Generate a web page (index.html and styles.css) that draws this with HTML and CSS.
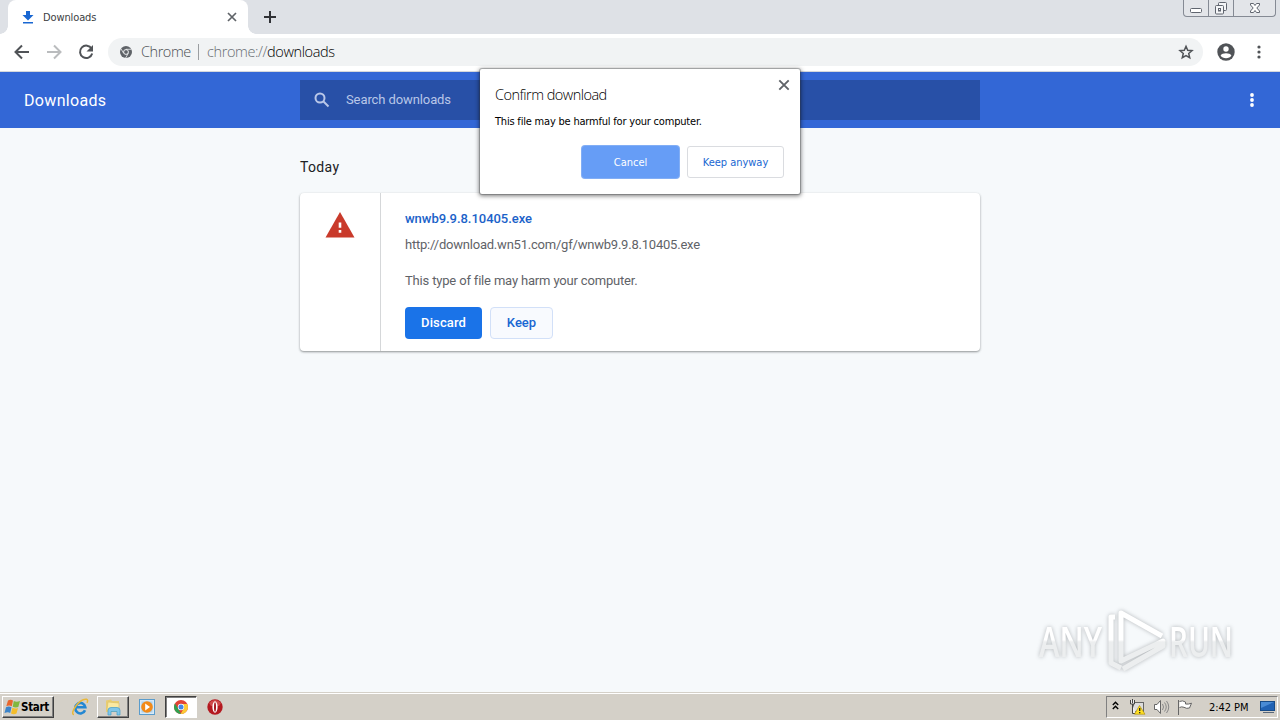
FILE: index.html
```html
<!DOCTYPE html>
<html lang="en">
<head>
<meta charset="utf-8">
<title>Downloads</title>
<link rel="stylesheet" href="styles.css">
</head>
<body>
<div class="desktop">
  <div class="tabstrip">
    <div class="tab">
      <svg class="tab-icon" width="12" height="13" viewBox="0 0 12 13"><path d="M4 0h4v4h3.500L6 9.500.5 4H4zM1 11h10v1.600H1z" fill="#1967d2"/></svg>
      <span class="tab-title">Downloads</span>
      <svg width="10" height="10" viewBox="0 0 10 10"><path d="M1 1l8 8M9 1L1 9" stroke="#5f6368" stroke-width="1.700"/></svg>
    </div>
    <svg class="new-tab" width="12" height="12" viewBox="0 0 12 12"><path d="M6 0v12M0 6h12" stroke="#303236" stroke-width="2"/></svg>
    <div class="win-buttons">
      <span class="wb"><svg width="14" height="16"><rect x="1.500" y="8.500" width="11" height="4" rx="1" fill="#fff" stroke="#60656f"/></svg></span>
      <span class="wb"><svg width="14" height="16" fill="#f4f5f7" stroke="#60656f"><rect x="4.500" y="2.500" width="8" height="8" rx="1"/><rect x="1.500" y="5.500" width="8" height="8.500" rx="1"/><rect x="4.500" y="8.500" width="2" height="2.500"/></svg></span>
      <span class="wb close"><svg width="14" height="16"><path d="M2.500 3.500h3L7 5.500l1.500-2h3v1.500L8.800 8l2.700 3v1.500h-3L7 10.500l-1.500 2h-3V11l2.700-3-2.700-3z" fill="#fff" stroke="#60656f"/></svg></span>
    </div>
  </div>
  <div class="toolbar">
    <svg width="16" height="16" viewBox="0 0 16 16" fill="none" stroke="#505357" stroke-width="2"><path d="M15 8H2M8 1.500L1.500 8 8 14.500"/></svg>
    <svg width="16" height="16" viewBox="0 0 16 16" fill="none" stroke="#babcbe" stroke-width="2"><path d="M1 8h13M8 1.500L14.500 8 8 14.500"/></svg>
    <svg width="16" height="16" viewBox="0 0 16 16" fill="none"><path d="M13.600 4.700A6.200 6.200 0 1 0 14.200 9.500" stroke="#505357" stroke-width="2"/><path d="M15 1v6.500H8.500z" fill="#505357"/></svg>
    <div class="omnibox">
      <svg width="12" height="12" viewBox="0 0 12 12"><circle cx="6" cy="6" r="6" fill="#5f6368"/><circle cx="6" cy="6" r="2.400" fill="#5f6368" stroke="#f1f3f4"/><path d="M6 3.300h5.500M3.700 7.300L1 2.800M8.300 7.300L5.600 12" stroke="#f1f3f4" stroke-width=".8"/></svg>
      <span class="site">Chrome</span>
      <span class="divider"></span>
      <span class="url">chrome://<b>downloads</b></span>
      <svg class="star" width="16" height="16" viewBox="0 0 16 16"><path d="M8 2.300l1.700 4 4.300.4-3.300 2.800 1 4.200L8 11.500l-3.700 2.200 1-4.200L2 6.700 6.300 6.300z" fill="none" stroke="#505357" stroke-width="1.500"/></svg>
    </div>
    <svg class="avatar" width="18" height="18" viewBox="0 0 18 18"><circle cx="9" cy="9" r="8.700" fill="#505357"/><circle cx="9" cy="6" r="2.700" fill="#fff"/><path d="M3.600 12.500C5 9.600 13 9.600 14.400 12.500 12.500 16 5.500 16 3.600 12.500z" fill="#fff"/></svg>
    <svg class="menu" width="4" height="16" viewBox="0 0 4 16" fill="#505357"><circle cx="2" cy="3" r="1.600"/><circle cx="2" cy="8" r="1.600"/><circle cx="2" cy="13" r="1.600"/></svg>
  </div>
  <div class="header">
    <h1>Downloads</h1>
    <div class="search">
      <svg width="16" height="16" viewBox="0 0 16 16" fill="none" stroke="#b9c7e8" stroke-width="2"><circle cx="6" cy="6" r="4.500"/><path d="M9.500 9.500l5 5"/></svg>
      <span>Search downloads</span>
    </div>
    <svg width="4" height="16" viewBox="0 0 4 16" fill="#fff"><circle cx="2" cy="3" r="1.900"/><circle cx="2" cy="8" r="1.900"/><circle cx="2" cy="13" r="1.900"/></svg>
  </div>
  <div class="content">
    <h2>Today</h2>
    <div class="card">
      <div class="card-icon"><svg width="30" height="26" viewBox="0 0 30 26"><path d="M15 0l14.500 25.500H.5z" fill="#c93a2b"/><path d="M13.700 10.500h2.600v5.300h-2.600zM13.700 18h2.600v2.700h-2.600z" fill="#fff"/></svg></div>
      <div class="card-body">
        <div class="file">wnwb9.9.8.10405.exe</div>
        <div class="link">http://download.wn51.com/gf/wnwb9.9.8.10405.exe</div>
        <div class="desc">This type of file may harm your computer.</div>
        <div class="actions"><span class="btn discard">Discard</span><span class="btn keep">Keep</span></div>
      </div>
    </div>
  </div>
  <div class="taskbar">
    <div class="start">
      <svg width="17" height="16" viewBox="0 0 17 16"><path d="M4 1.500Q6.500 0 9 1.500L7.800 7.300Q5.300 6 2.300 7.200z" fill="#e8662c"/><path d="M9.800 2Q12.500 3.300 16 2L14.300 8Q11.500 9 8.700 7.700z" fill="#81b73e"/><path d="M2 8.200Q5 7 7.500 8.300L6.200 14Q4 12.700 .5 14z" fill="#3c84c9"/><path d="M8.400 8.700Q11 10 14 8.900L12.500 14.500Q9.700 15.800 7 14.400z" fill="#f4bd2b"/></svg>
      <span>Start</span>
    </div>
    <div class="task ie"><svg width="18" height="18" viewBox="0 0 18 18" fill="none"><path d="M14 12.200A5 5.300 0 1 1 14.300 9.200H5.500" stroke="#2387d2" stroke-width="2.600"/><path d="M3 16.500C-2 16 8.500 0 15.500 1.300c1.500.4 1.300 2 .5 3.500" stroke="#e9b83a" stroke-width="1.500"/></svg></div>
    <div class="task raised"><svg width="18" height="18" viewBox="0 0 18 18"><path d="M2 2.500l5-1 1 1.500h7V14H2z" fill="#e9cd72"/><path d="M4 4l11 1v7H3z" fill="#fae9a2" stroke="#d8bd62" stroke-width=".6"/><path d="M4 17v-4.500q0-3 3-3h6q3 0 3 3V17h-3v-3.500H7V17z" fill="#7fc6ea" stroke="#459dc9" stroke-width=".7"/></svg></div>
    <div class="task wmp"><svg width="16" height="16" viewBox="0 0 16 16"><rect x=".5" y=".5" width="15" height="15" fill="#d6e9f7" stroke="#5a9ccc"/><rect x="2.500" y="2.500" width="11" height="11" fill="#a9cfec"/><circle cx="8" cy="8" r="5.800" fill="#f28a18"/><path d="M6.200 4.500L11 8l-4.800 3.500z" fill="#fff"/></svg></div>
    <div class="task pressed"><svg width="14" height="14" viewBox="0 0 14 14"><circle cx="7" cy="7" r="7" fill="#e14335"/><path d="M.9 3.600L4.300 8.700 7 14A7 7 0 0 1 .9 3.600z" fill="#2fa04f"/><path d="M13.200 3.900H7L9.700 8.600 6.600 14a7 7 0 0 0 6.600-10.100z" fill="#fbcb35"/><circle cx="7" cy="7" r="3.200" fill="#fff"/><circle cx="7" cy="7" r="2.500" fill="#4285e8"/></svg></div>
    <div class="task opera"><svg width="16" height="16" viewBox="0 0 16 16"><circle cx="8" cy="8" r="7.700" fill="#b41920"/><path d="M2 4Q8-2 14 4L12 7H4z" fill="#cf4a4b"/><ellipse cx="8" cy="8" rx="2.600" ry="5.800" fill="#fff"/><ellipse cx="8" cy="8" rx="1" ry="4.700" fill="#a51920"/></svg></div>
    <div class="tray">
      <svg class="chev" width="7" height="9" viewBox="0 0 7 9" fill="none" stroke="#000" stroke-width="1.400"><path d="M.8 4L3.500 1.300 6.200 4M.8 8L3.500 5.300 6.200 8"/></svg>
      <svg class="net" width="17" height="16" viewBox="0 0 17 16"><rect x="4.500" y="3.500" width="10" height="9" fill="#ddd" stroke="#666"/><path d="M1.500 1v4h4V1M3.500 5v9.500H7M3.500 0v4" stroke="#444" fill="#eee"/><path d="M10.500 6.500l5.500 8.700H5.500z" fill="#ffdf22" stroke="#a78700" stroke-width=".6"/><path d="M10.700 9v3M10.700 13v1.200" stroke="#222" stroke-width="1.300"/></svg>
      <svg class="vol" width="17" height="16" viewBox="0 0 17 16" fill="none" stroke="#666"><path d="M1.500 5.500h2.500l3.500-4v13L4 10.500H1.500z" fill="#fff"/><path d="M9.500 5q2 3 0 6M11.500 3.500q3.500 4.500 0 9M13.500 2q4.500 6 0 12" stroke="#888"/></svg>
      <svg class="flag" width="16" height="16" viewBox="0 0 16 16"><path d="M1.500 1v15M2.500 2.500q3-1.500 6 .5v2q3 .5 6-.8L12.500 9q-3 1-5.500-.7Q4.500 7.300 2.500 8.500" fill="#fff" stroke="#666"/></svg>
      <span class="clock">2:42 PM</span>
      <svg class="show" width="15" height="14" viewBox="0 0 15 14"><rect x=".5" y="1.500" width="14" height="9" fill="#2062b4" stroke="#174b87"/><path d="M1 2h13L1 8z" fill="#498bd5"/><path d="M3 12.500h11" stroke="#596779"/></svg>
    </div>
  </div>

  <div class="dialog">
    <svg class="dlg-close" width="12" height="12" viewBox="0 0 12 12"><path d="M1.300 1.300l9.400 9.400M10.700 1.300L1.300 10.700" stroke="#5f6368" stroke-width="1.900"/></svg>
    <div class="dlg-title">Confirm download</div>
    <div class="dlg-text">This file may be harmful for your computer.</div>
    <div class="dlg-actions"><span class="dbtn cancel">Cancel</span><span class="dbtn anyway">Keep anyway</span></div>
  </div>
  <svg class="watermark" width="230" height="74" viewBox="0 0 230 74">
    <defs><linearGradient id="wm" gradientUnits="userSpaceOnUse" x1="0" y1="0" x2="0" y2="74"><stop offset=".47" stop-color="#fff"/><stop offset=".5" stop-color="#eceeef"/></linearGradient></defs>
    <g class="wm-shadow">
      <text x="4" y="52" textLength="63" lengthAdjust="spacingAndGlyphs" class="wm-text">ANY</text>
      <text x="134" y="52" textLength="64" lengthAdjust="spacingAndGlyphs" class="wm-text">RUN</text>
      <path d="M80 12h-4v46l10 5M86 50V8l41 23M86 19v37l42-20v5L88 64" fill="none" stroke="url(#wm)" stroke-width="5" stroke-linejoin="round"/>
    </g>
  </svg>
</div>
</body>
</html>
```
FILE: styles.css
```css
* { box-sizing: border-box; }
body { margin: 0; font-family: Roboto, sans-serif; }
svg { display: block; flex: none; }
span, h1, h2, .dlg-title, .dlg-text, .file, .link, .desc { white-space: nowrap; }
.desktop { position: relative; width: 1280px; height: 720px; overflow: hidden; display: flex; flex-direction: column; background: #f6f9fb; }
.tabstrip { height: 34px; background: #dee1e6; display: flex; padding-left: 8px; }
.tab { position: relative; width: 240px; height: 34px; background: #fff; border-radius: 8px 8px 0 0; display: flex; align-items: center; padding: 0 11px 0 14px; }
.tab::before, .tab::after { content: ""; position: absolute; bottom: 0; width: 8px; height: 8px; }
.tab::before { left: -8px; background: radial-gradient(circle at 0 0, #dee1e6 7.5px, #fff 8px); }
.tab::after { right: -8px; background: radial-gradient(circle at 100% 0, #dee1e6 7.5px, #fff 8px); }
.tab-title { padding-top: 1px; font: 11px/14px "DejaVu Sans Condensed", "DejaVu Sans", sans-serif; font-stretch: condensed; letter-spacing: -.12px; color: #3c4043; margin-left: 9px; flex: 1; }
.new-tab { margin: 11px 0 0 16px; }
.win-buttons { margin: 0 4px 0 auto; height: 17px; display: flex; border: 1px solid #858a94; border-top: 0; border-radius: 0 0 4px 4px; background: #e3e5e9; }
.wb { width: 25px; display: flex; justify-content: center; border-right: 1px solid #858a94; }
.wb.close { width: 41px; border: 0; }
.toolbar { height: 38px; background: #fff; border-bottom: 1px solid #d5d8dc; display: flex; align-items: center; padding: 0 19px 1px 14px; gap: 16px; }
.omnibox { width: 1096px; height: 28px; margin-left: -2px; border-radius: 14px; background: #f1f3f4; display: flex; align-items: center; padding: 0 9px 0 12px; font: 300 14.5px/20px "Open Sans", "Noto Sans", sans-serif; color: #4b4f53; }
.site { margin-left: 9px; width: 49px; letter-spacing: -.45px; }
.divider { width: 1px; height: 16px; margin: 0 8px; background: #9b9ea1; }
.url { color: #686d73; letter-spacing: -.4px; }
.url b { font-weight: inherit; color: #000; }
.star { margin-left: auto; }
.avatar { margin-left: -2px; }
.menu { margin-left: 6px; }
.header { height: 56px; background: #3367d6; display: flex; align-items: center; padding: 0 26px 0 24px; }
.header h1 { margin: 0; padding-top: 2px; width: 276px; font-size: 16px; font-weight: 400; letter-spacing: .33px; color: #fff; line-height: 20px; }
.search { width: 680px; height: 40px; background: #2850a7; display: flex; align-items: center; padding-left: 14px; gap: 16px; color: #b9c7e8; font-size: 13px; letter-spacing: -.1px; }
.search span { padding-bottom: 2px; }
.header > svg { margin-left: auto; }
.content { flex: 1; padding: 29px 300px 0; }
.content h2 { margin: 0; height: 36px; font-size: 14px; line-height: 21px; font-weight: 400; letter-spacing: .35px; color: #202124; }
.card { height: 158px; background: #fff; border-radius: 4px; display: flex; box-shadow: 0 1px 2px rgba(60,64,67,.4), 0 1px 3px rgba(60,64,67,.2); }
.card-icon { width: 81px; border-right: 1px solid #d5d7d9; padding: 19px 0 0 25px; }
.card-body { padding: 16px 24px; font-size: 13px; line-height: 20px; color: #5f6368; }
.file { color: #1b62c9; font-weight: 500; letter-spacing: -.04px; }
.link { margin-top: 6px; letter-spacing: -.215px; }
.desc { margin-top: 16px; letter-spacing: -.17px; }
.actions { display: flex; gap: 8px; margin-top: 16px; }
.btn { height: 32px; border-radius: 4px; font-weight: 500; line-height: 32px; text-align: center; }
.discard { width: 77px; background: #1a73e8; color: #fff; letter-spacing: .1px; }
.keep { width: 63px; background: #f8fafe; border: 1px solid #d2e0f8; line-height: 30px; color: #1967d2; }
.taskbar { height: 28px; background: #d4d0c8; border-top: 1px solid #d4d0c8; box-shadow: inset 0 1px #fff; display: flex; align-items: flex-start; padding: 3px 2px 0; }
.start { width: 52px; height: 22px; border: 1px solid; border-color: #fff #404040 #404040 #fff; box-shadow: inset -1px -1px #808080; display: flex; align-items: center; padding-left: 1px; font: bold 11.5px/16px "DejaVu Sans Condensed", "DejaVu Sans", sans-serif; font-stretch: condensed; letter-spacing: -.3px; color: #000; }
.task { width: 32px; height: 22px; display: flex; align-items: center; justify-content: center; margin-right: 2px; }
.ie { margin-left: 10px; width: 31px; }
.raised { border: 1px solid; border-color: #fff #404040 #404040 #fff; box-shadow: inset -1px -1px #808080; }
.pressed { background: #fff; border: 1px solid; border-color: #404040 #fff #fff #404040; box-shadow: inset 1px 1px #808080; }
.tray { margin-left: auto; width: 172px; height: 22px; border: 1px solid; border-color: #808080 #fff #fff #808080; display: flex; align-items: center; padding-left: 5px; }
.chev { margin-bottom: 3px; }
.net { margin-left: 10px; }
.vol { margin-left: 7px; }
.flag { margin-left: 7px; }
.clock { margin-left: 16px; width: 42px; padding-top: 1px; font: 11px/14px "DejaVu Sans Condensed", "DejaVu Sans", sans-serif; font-stretch: condensed; letter-spacing: -.05px; color: #000; }
.show { margin-left: 9px; }
.dialog { position: absolute; left: 480px; top: 69px; width: 320px; height: 125px; background: #fff; border-radius: 2px; box-shadow: 0 0 0 1px rgba(60,64,67,.28), 0 1px 4px 1px rgba(0,0,0,.5); padding: 16px 16px 16px 15px; font-family: "DejaVu Sans Condensed", "DejaVu Sans", sans-serif; font-stretch: condensed; color: #202124; }
.dlg-close { position: absolute; right: 10px; top: 10px; }
.dlg-title { font: 300 14.5px/20px "Open Sans", "Noto Sans", sans-serif; letter-spacing: -.53px; color: #000; }
.dlg-text { margin-top: 10px; font-size: 11px; line-height: 14px; letter-spacing: -.2px; color: #000; }
.dlg-actions { display: flex; justify-content: flex-end; gap: 8px; margin-top: 17px; }
.dbtn { width: 97px; height: 32px; border-radius: 3px; border: 1px solid #dadce0; font-size: 11px; line-height: 31px; text-align: center; letter-spacing: -.02px; color: #1967d2; }
.cancel { background: #669df6; border-color: #669df6; box-shadow: 0 0 0 1px #82aef5; color: #fff; }
.watermark { position: absolute; left: 1035px; top: 605px; overflow: visible; }
.wm-shadow { filter: drop-shadow(0 0 2px rgba(80,85,90,.4)); }
.wm-text { font: 600 42px "Open Sans", "Noto Sans", sans-serif; fill: url(#wm); }
```
